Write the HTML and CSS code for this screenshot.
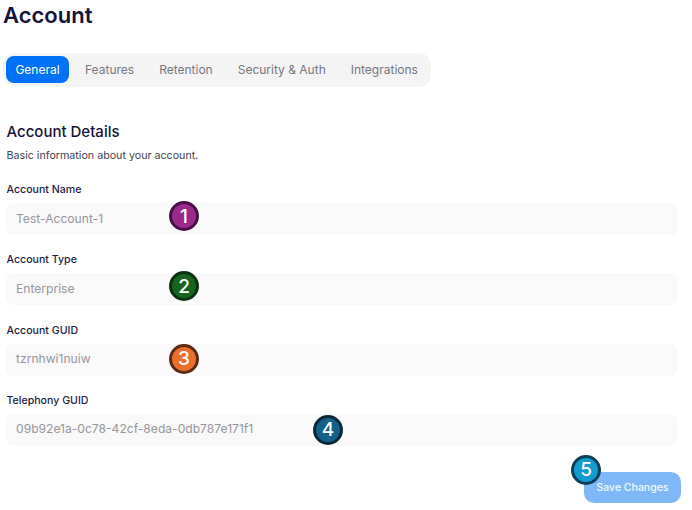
FILE: index.html
```html
<!DOCTYPE html>
<html lang="en">
<head>
<meta charset="utf-8">
<title>Account</title>
<link rel="stylesheet" href="styles.css">
</head>
<body>
<main class="page">
  <h1 class="title">Account</h1>
  <nav class="tabs">
    <a class="tab active">General</a>
    <a class="tab">Features</a>
    <a class="tab">Retention</a>
    <a class="tab">Security &amp; Auth</a>
    <a class="tab">Integrations</a>
  </nav>
  <section class="details">
    <h2 class="heading">Account Details</h2>
    <p class="sub">Basic information about your account.</p>
    <div class="field">
      <div class="label">Account Name</div>
      <div class="input">Test-Account-1<span class="badge b1">1</span></div>
    </div>
    <div class="field">
      <div class="label">Account Type</div>
      <div class="input">Enterprise<span class="badge b2">2</span></div>
    </div>
    <div class="field">
      <div class="label">Account GUID</div>
      <div class="input">tzrnhwi1nuiw<span class="badge b3">3</span></div>
    </div>
    <div class="field">
      <div class="label">Telephony GUID</div>
      <div class="input">09b92e1a-0c78-42cf-8eda-0db787e171f1<span class="badge b4">4</span></div>
    </div>
  </section>
  <div class="actions">
    <button class="save">Save Changes<span class="badge b5">5</span></button>
  </div>
</main>
</body>
</html>
```
FILE: styles.css
```css
* { box-sizing: border-box; }
html, body { margin: 0; padding: 0; background: #fff; }
body { font-family: Inter, "Liberation Sans", sans-serif; color: #1a1a3a; height: 510px; overflow: hidden; }
.page { padding: 0 11px 0 3px; }
.title { margin: 0; font-size: 22px; line-height: 30px; font-weight: 600; color: #14143a; }
.tabs { display: flex; margin-top: 23px; padding: 3px; height: 34px; width: 428px; background: #f4f4f5; border-radius: 12px; }
.tab { flex: none; display: flex; align-items: center; justify-content: center; font-size: 12px; color: #777780; height: 27px; padding: 0 12.5px; white-space: nowrap; }
.tab.active { background: #0072f5; color: #fff; border-radius: 8px; padding: 0; width: 63px; margin-right: 3.5px; }
.details { padding: 0 0 0 3px; margin-top: 34px; }
.heading { margin: 0 0 0 0.5px; font-size: 15px; line-height: 21px; font-weight: 500; color: #14143a; }
.sub { margin: 5px 0 0 0.5px; font-size: 10.7px; line-height: 18px; color: #3f3f55; }
.field { margin-top: 17.33px; }
.field:first-of-type { margin-top: 17px; }
.label { margin: 0 0 5px 0.5px; font-size: 10.6px; font-weight: 500; line-height: 16px; color: #1c1c44; }
.input { position: relative; display: flex; align-items: center; height: 32px; padding: 0 10px 2px; font-size: 12.1px; color: #97979c; background: #f9f9f9; border-radius: 8px; width: 672px; }
.badge { position: absolute; width: 30px; height: 30px; border-radius: 50%; border: 3px solid #000; display: flex; align-items: center; justify-content: center; color: #fff; font-size: 19px; font-weight: 500; top: -2px; left: 163px; }
.b1 { background: #9a2a8e; border-color: #4a0f44; }
.b2 { background: #17641f; border-color: #0a3310; }
.b3 { background: #e86f2c; border-color: #5c2c12; top: 0; }
.b4 { background: #13608a; border-color: #08283c; top: 1px; left: 307px; }
.b5 { background: #129bd1; border-color: #0a3f57; top: -17px; left: -13px; }
.actions { display: flex; justify-content: flex-end; margin-top: 26px; }
.save { position: relative; width: 97px; height: 31px; padding: 0; border: 0; border-radius: 10px; background: #7fb8f9; color: #f0f6fe; font-family: inherit; font-size: 10.5px; font-weight: 500; }
```
